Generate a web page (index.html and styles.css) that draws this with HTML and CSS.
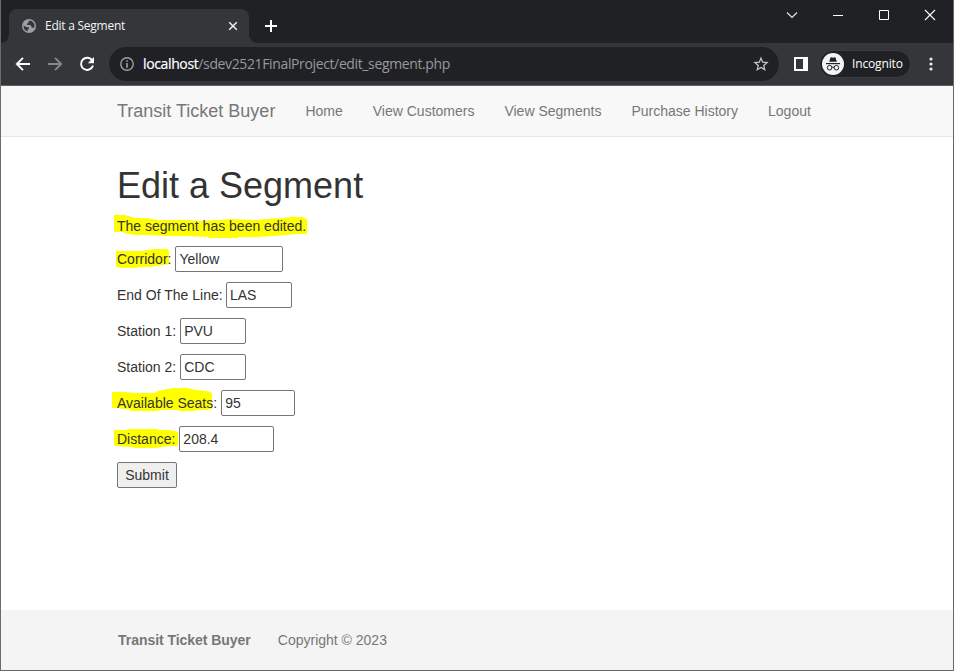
FILE: index.html
```html
<!DOCTYPE html>
<html lang="en">
<head>
<meta charset="utf-8">
<title>Edit a Segment</title>
<link rel="stylesheet" href="styles.css">
</head>
<body>
<div class="window">
  <header class="tabstrip">
    <div class="tab">
      <svg class="globe" width="14" height="14" viewBox="0 0 14 14"><circle cx="7" cy="7" r="7" fill="#9aa0a6"/><path d="M7.7 1.4 6.4 2.7v1.2L5 4.7v1.4h3.4l1 1.2v1l1 .4h1.7a5.4 5.4 0 0 0-4.4-7.3zM1.6 6.7l3.5 1.5h1.7v1.6l-1.1 1v1.5a5.5 5.5 0 0 1-4.1-5.6z" fill="#35363a"/></svg>
      <span class="tab-title">Edit a Segment</span>
      <svg class="tab-close" width="10" height="10" viewBox="0 0 10 10"><path d="M1.2 1.2l7.6 7.6M8.8 1.2L1.2 8.8" stroke="#e8eaed" stroke-width="1.6"/></svg>
    </div>
    <svg class="new-tab" width="12" height="12" viewBox="0 0 12 12"><path d="M6 0v12M0 6h12" stroke="#fff" stroke-width="2"/></svg>
    <div class="controls">
      <svg width="12" height="12" viewBox="0 0 12 12"><path d="M1 3.5l5 5 5-5" fill="none" stroke="#e8eaed" stroke-width="1.1"/></svg>
      <svg width="12" height="12" viewBox="0 0 12 12"><path d="M1 6.5h10" stroke="#fff"/></svg>
      <svg width="12" height="12" viewBox="0 0 12 12"><path d="M1.5 1.5h9v9h-9z" fill="none" stroke="#fff"/></svg>
      <svg width="12" height="12" viewBox="0 0 12 12"><path d="M1 1l10 10M11 1L1 11" stroke="#fff" stroke-width="1.1"/></svg>
    </div>
  </header>
  <div class="toolbar">
    <div class="nav-icons">
      <svg width="16" height="16" viewBox="0 0 16 16"><path d="M15 8H2.4M8 1.8L1.8 8 8 14.2" fill="none" stroke="#fff" stroke-width="1.9"/></svg>
      <svg width="16" height="16" viewBox="0 0 16 16"><path d="M1 8h12.6M8 1.8L14.2 8 8 14.2" fill="none" stroke="#87888b" stroke-width="1.9"/></svg>
      <svg width="16" height="16" viewBox="0 0 16 16"><path d="M13.4 4.7A6.1 6.1 0 1 0 14 9.5" fill="none" stroke="#fff" stroke-width="1.9"/><path d="M15 1v6.2H8.8z" fill="#fff"/></svg>
    </div>
    <div class="omnibox">
      <svg width="14" height="14" viewBox="0 0 14 14"><circle cx="7" cy="7" r="6.2" fill="none" stroke="#9aa0a6" stroke-width="1.4"/><path d="M7 3.2v1.6M7 6v4.7" stroke="#9aa0a6" stroke-width="1.6"/></svg>
      <span class="url"><b>localhost</b><i>/sdev2521FinalProject/edit_segment.php</i></span>
      <svg class="star" width="16" height="16" viewBox="0 0 24 24"><path d="M12 3.2l2.5 6.1 6.6.5-5 4.3 1.5 6.4-5.6-3.4-5.6 3.4 1.5-6.4-5-4.3 6.6-.5z" fill="none" stroke="#c4c7ca" stroke-width="1.9"/></svg>
    </div>
    <svg class="panel" width="14" height="14" viewBox="0 0 14 14"><path d="M0 0h14v14H0zM2 2v10h7V2z" fill="#fff" fill-rule="evenodd"/></svg>
    <div class="incognito">
      <svg width="22" height="22" viewBox="0 0 22 22"><circle cx="11" cy="11" r="11" fill="#f1f3f4"/><path d="M7.2 8.8l1.2-4.1q.2-.6.9-.4l1.7.4 1.7-.4q.7-.2.9.4l1.2 4.1z" fill="#202124"/><path d="M4 10.6h14" stroke="#202124" stroke-width="1.2"/><g fill="none" stroke="#202124"><circle cx="7.6" cy="14.7" r="2.3"/><circle cx="14.4" cy="14.7" r="2.3"/><path d="M9.8 14.4q1.2-.8 2.4 0"/></g></svg>
      <span>Incognito</span>
    </div>
    <svg class="more" width="4" height="14" viewBox="0 0 4 14" fill="#e8eaed"><circle cx="2" cy="2" r="1.6"/><circle cx="2" cy="7" r="1.6"/><circle cx="2" cy="12" r="1.6"/></svg>
  </div>
  <nav class="navbar">
    <a class="brand">Transit Ticket Buyer</a>
    <a>Home</a><a>View Customers</a><a>View Segments</a><a>Purchase History</a><a>Logout</a>
  </nav>
  <main>
    <h1>Edit a Segment</h1>
    <p class="message"><svg class="marker" width="210" height="26" viewBox="113 213 210 26"><path d="M114 215H125L135 218H145L159 220H188L199 221 219 220 229 219 256 220 266 219 284 218 290 217H302L307 219V234H298L285 235 274 236 257 237H238L237 238H209L208 237 185 236H165L150 235H137L128 234 122 232H114z"/></svg>The segment has been edited.</p>
    <p><svg class="marker corridor" width="64" height="28" viewBox="113 246 64 28"><path d="M116 251h26l5-1 8-1h13l1 3v12l-5 1h-3l-4 1-9 1h-8l-5 1h-15l-1-1h-3z"/></svg><label for="corridor">Corridor:</label> <input id="corridor" class="w-corridor" value="Yellow"></p>
    <p><label class="tight" for="end">End Of The Line:</label> <input id="end" class="w-station" value="LAS"></p>
    <p><label for="s1">Station 1:</label> <input id="s1" class="w-station" value="PVU"></p>
    <p><label for="s2">Station 2:</label> <input id="s2" class="w-station" value="CDC"></p>
    <p><svg class="marker seats" width="105" height="28" viewBox="110 386 105 28"><path d="M112 392H124L136 393H154L158 391 167 389 175 388H187L196 390 207 391 212 393V409L206 410H198L194 411H181L176 410H162L156 411H132L128 409H120V408H112z"/></svg><label for="seats">Available Seats:</label> <input id="seats" class="w-seats" value="95"></p>
    <p><svg class="marker distance" width="70" height="28" viewBox="110 424 70 28"><path d="M114 430H126L128 429H157L158 430H169L175 431 178 432V446H171L161 447 156 448H137L130 447 116 446H114z"/></svg><label for="distance">Distance:</label> <input id="distance" class="w-distance" value="208.4"></p>
    <p><button type="button">Submit</button></p>
  </main>
  <footer><strong>Transit Ticket Buyer</strong><span>Copyright © 2023</span></footer>
</div>
</body>
</html>
```
FILE: styles.css
```css
* { box-sizing: border-box; }
html, body { margin: 0; height: 100%; }
body { overflow: hidden; font: 14px/20px "Liberation Sans", Arial, sans-serif; color: #333; }
svg { display: block; flex: none; }
.window {
  display: flex; flex-direction: column; width: 954px; height: 671px;
  background: #fff; border: solid #66666a; border-width: 0 1px 1px;
  border-left-color: #706b65;
}
.tabstrip {
  display: flex; height: 43px; flex: none; padding: 9px 17px 0 8px;
  background: #202124; font: 12px/34px "Open Sans", "Noto Sans", sans-serif; color: #f1f3f4;
}
.tab {
  position: relative; display: flex; align-items: center; width: 240px; height: 34px;
  padding: 0 11px 0 13px; background: #35363a; border-radius: 8px 8px 0 0;
}
.tab::before, .tab::after { content: ""; position: absolute; bottom: 0; width: 8px; height: 8px; }
.tab::before { left: -8px; background: radial-gradient(circle at 0 0, transparent 7.5px, #35363a 8px); }
.tab::after { right: -8px; background: radial-gradient(circle at 100% 0, transparent 7.5px, #35363a 8px); }
.tab-title { margin-left: 9px; letter-spacing: -0.25px; white-space: nowrap; }
.tab-close { margin-left: auto; }
.new-tab { margin: 11px 0 0 16px; }
.controls { display: flex; gap: 34px; margin-left: auto; }
.toolbar {
  display: flex; align-items: center; flex: none; height: 43px; padding: 0 20px 1px 14px;
  background: #35363a; border-bottom: 1px solid #606064;
}
.nav-icons { display: flex; gap: 16px; }
.omnibox {
  display: flex; align-items: center; width: 670px; height: 34px; margin-left: 14px;
  padding: 0 10px 0 11px; border-radius: 17px; background: #202124;
  font: 14px/20px "Open Sans", "Noto Sans", sans-serif;
}
.url { margin-left: 9px; letter-spacing: -0.37px; white-space: nowrap; }
.url b { font-weight: 400; color: #fff; -webkit-text-stroke: 0.2px #fff; }
.url i { font-style: normal; color: #969a9f; }
.star { margin-left: auto; }
.panel { margin-left: 15px; }
.incognito {
  display: flex; align-items: center; width: 92px; height: 28px; margin-left: 11px; padding-left: 2px;
  border: 1px solid #3c3d41; border-radius: 14px; background: #202124; color: #fff;
  font: 12px/20px "Open Sans", "Noto Sans", sans-serif;
}
.incognito span { margin-left: 8px; letter-spacing: -0.15px; }
.more { margin-left: auto; }
.navbar {
  display: flex; flex: none; gap: 30px; height: 51px; padding-left: 116px;
  line-height: 50px; color: #777; background: #f8f8f8; border-bottom: 1px solid #e7e7e7;
}
.brand { font-size: 18px; }
main { flex: 1; padding: 29px 0 0 116px; }
h1 { margin: 0 0 10px; font-size: 36px; line-height: 40px; font-weight: 400; }
p { position: relative; z-index: 0; display: flex; align-items: center; gap: 4px; height: 26px; margin: 0 0 10px; }
.message { height: 20px; }
.marker { position: absolute; z-index: -1; left: -4px; top: -3px; fill: #ff0; }
.corridor { top: 0; }
.seats { left: -7px; top: -4px; }
.distance { left: -7px; top: -2px; }
.tight { margin-right: -0.6px; }
input {
  height: 26px; margin: 0; padding: 1px 3px; border: 1px solid #767676; border-radius: 2px;
  background: #fff; color: #333; font: inherit;
}
.w-corridor { width: 108px; }
.w-station { width: 66px; }
.w-seats { width: 74px; }
.w-distance { width: 95px; }
button {
  width: 60px; height: 26px; padding: 0; border: 1px solid #767676; border-radius: 2px;
  background: #efefef; color: #333; font: inherit;
}
footer {
  display: flex; align-items: center; flex: none; gap: 27px; height: 60px; padding-left: 117px;
  background: #f4f4f4; color: #777;
}
footer strong { letter-spacing: -0.04px; }
```
